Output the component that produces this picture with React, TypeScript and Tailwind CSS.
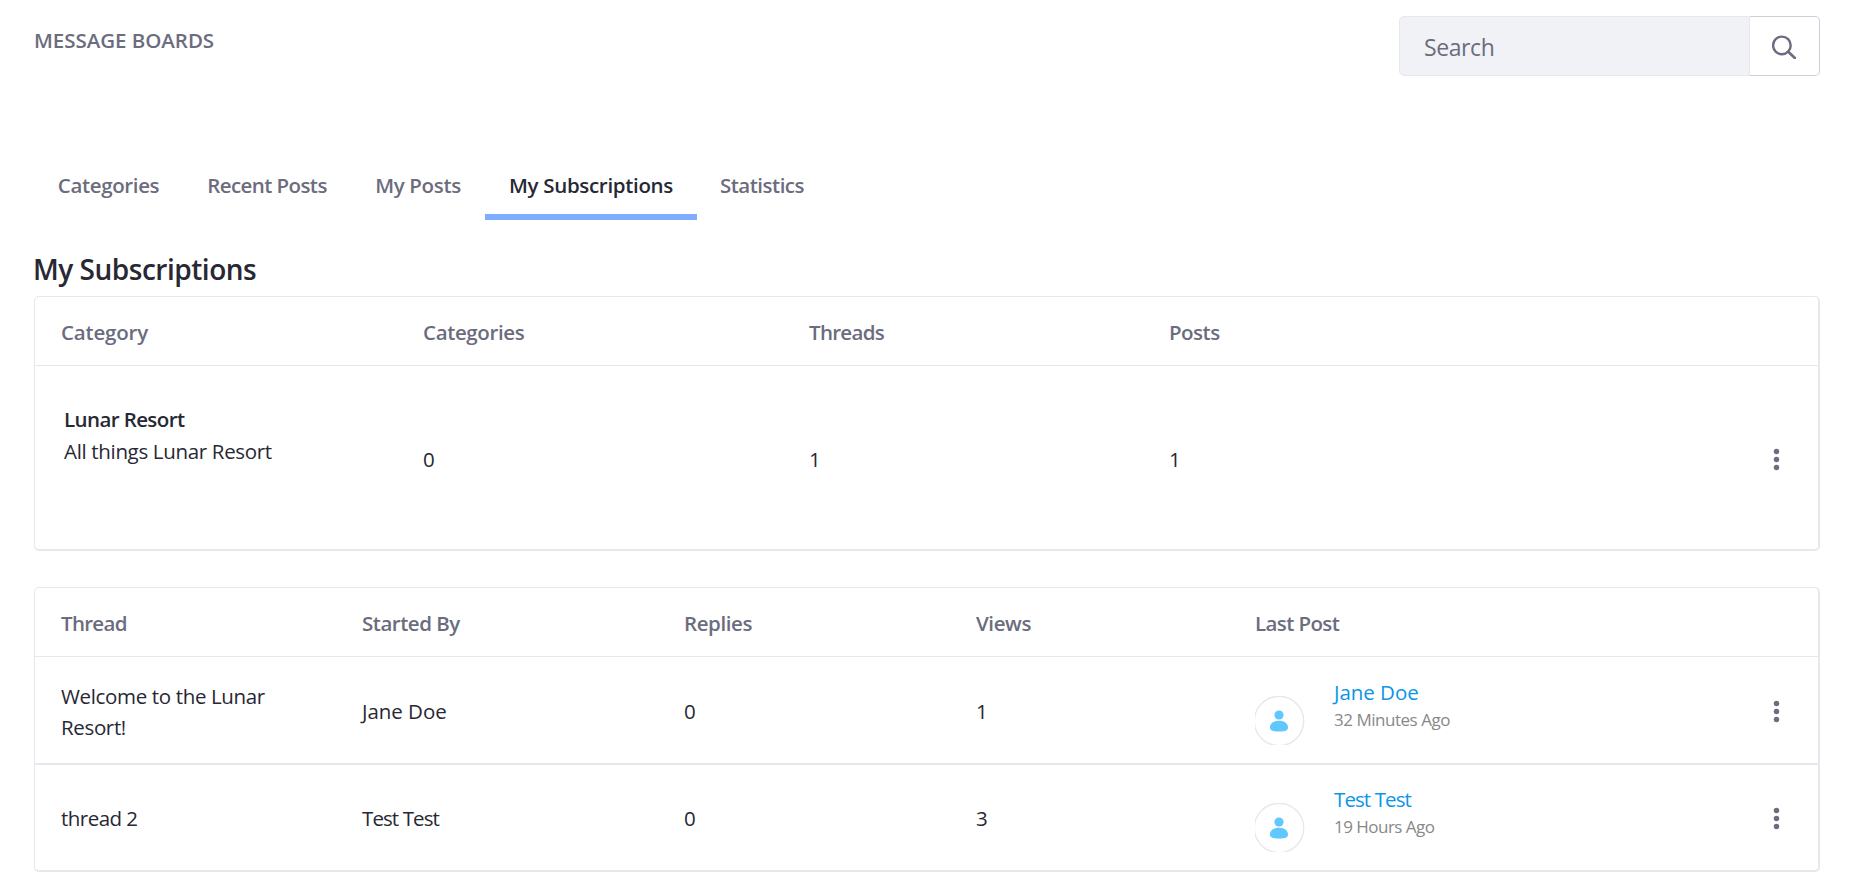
import React from "react";

const DOTS = [4, 12, 20];

function Kebab() {
  return (
    <button className="h-6 w-5" aria-label="Actions">
      <svg viewBox="0 0 20 24" className="h-6 w-5 fill-[#6b6c7e]">
        {DOTS.map((y) => (
          <circle key={y} cx="9.5" cy={y - 0.5} r="2.75" />
        ))}
      </svg>
    </button>
  );
}

function Avatar() {
  return (
    <svg viewBox="0 0 50 49" className="mt-[38px] h-[49px] w-[50px] shrink-0">
      <circle cx="24" cy="25" r="24.7" fill="#fff" stroke="#e7e7ed" strokeWidth="1.4" />
      <circle cx="24" cy="19" r="4.6" fill="#5fc8ff" />
      <path
        d="M24 24.7c5.2 0 9 2.6 9 6.6 0 3.2-1.9 4.3-9 4.3s-9-1.1-9-4.3c0-4 3.8-6.6 9-6.6z"
        fill="#5fc8ff"
      />
    </svg>
  );
}

const TABS = [
  { label: "Categories", cls: "w-[149px] tracking-[-0.36px]" },
  { label: "Recent Posts", cls: "w-[168px] tracking-[-0.58px]" },
  { label: "My Posts", cls: "w-[134px] tracking-[-0.34px]" },
  { label: "My Subscriptions", cls: "w-[212px] tracking-[-0.32px]", active: true },
  { label: "Statistics", cls: "w-[130px] tracking-[-0.5px]" },
];

const THREADS = [
  {
    title: "Welcome to the Lunar Resort!",
    titleCls: "tracking-[-0.35px]",
    author: "Jane Doe",
    authorCls: "tracking-[-0.05px]",
    replies: 0,
    views: 1,
    when: "32 Minutes Ago",
    whenCls: "tracking-[-0.48px]",
    rowCls: "h-[107px] border-b-2",
  },
  {
    title: "thread 2",
    titleCls: "tracking-[-0.53px]",
    author: "Test Test",
    authorCls: "tracking-[-0.9px]",
    replies: 0,
    views: 3,
    when: "19 Hours Ago",
    whenCls: "tracking-[-0.52px]",
    rowCls: "h-[105px]",
  },
];

const CARD = "rounded-[5px] border border-r-2 border-b-2 border-[#e7e7ed]";
const HEAD =
  "grid h-[69px] items-center border-b border-[#e7e7ed] pt-0.5 pl-[26px] font-[550] text-[#6b6c7e]";
const CATEGORY_COLS = "grid-cols-[362px_386px_360px_1fr_51px]";
const THREAD_COLS = "grid-cols-[301px_322px_292px_279px_1fr_51px]";

export default function App() {
  return (
    <div className="h-[886px] overflow-hidden bg-white pr-[30px] pl-[34px] font-['Open_Sans','Noto_Sans',sans-serif] text-[20.5px] leading-[31px] text-[#272833]">
      <header className="flex h-[154px] items-start justify-between pt-4">
        <h1 className="pt-[9px] font-[550] tracking-[-0.04px] text-[#6b6c7e]">MESSAGE BOARDS</h1>
        <div className="flex h-[60px] w-[421px]">
          <div className="flex flex-1 items-center rounded-l-[5px] border border-[#e7e7ed] bg-[#f1f2f5] pt-[3px] pl-6 text-[23px] tracking-[-0.4px] text-[#6b6c7e]">
            Search
          </div>
          <button
            aria-label="Submit search"
            className="flex w-[70px] items-center justify-center rounded-r-[5px] border border-l-0 border-[#cdced9]"
          >
            <svg viewBox="0 0 26 26" className="h-[26px] w-[26px]" fill="none" stroke="#6b6c7e">
              <circle cx="9.9" cy="12.4" r="8.8" strokeWidth="2.4" />
              <path d="M16.3 18.8 22.8 25" strokeWidth="2.6" strokeLinecap="round" />
            </svg>
          </button>
        </div>
      </header>

      <nav className="flex h-[66px] font-[550] text-[#6b6c7e]">
        {TABS.map((t) => (
          <div
            key={t.label}
            className={`flex justify-center border-b-6 pt-4 ${t.cls} ${
              t.active ? "border-[#80acff] text-[#272833]" : "border-transparent"
            }`}
          >
            {t.label}
          </div>
        ))}
      </nav>

      <h2 className="-ml-px h-[76px] pt-[31px] text-[28px] leading-9 font-[550] tracking-[-0.48px]">
        My Subscriptions
      </h2>

      <section className={CARD}>
        <div className={`${HEAD} ${CATEGORY_COLS}`}>
          <span className="tracking-[-0.2px]">Category</span>
          <span className="tracking-[-0.36px]">Categories</span>
          <span className="tracking-[-0.7px]">Threads</span>
          <span className="tracking-[-0.5px]">Posts</span>
        </div>
        <div className={`grid h-[183px] items-center pl-[26px] ${CATEGORY_COLS}`}>
          <div className="self-start pt-[37px] pl-[3px] leading-8">
            <div className="font-[550] tracking-[-0.6px]">Lunar Resort</div>
            <div className="tracking-[-0.33px]">All things Lunar Resort</div>
          </div>
          <span className="pt-[3px]">0</span>
          <span className="pt-[3px]">1</span>
          <span className="pt-[3px]">1</span>
          <span className="flex pt-1">
            <Kebab />
          </span>
        </div>
      </section>

      <section className={`mt-9 ${CARD}`}>
        <div className={`${HEAD} ${THREAD_COLS}`}>
          <span className="tracking-[-0.7px]">Thread</span>
          <span className="tracking-[-0.48px]">Started By</span>
          <span className="tracking-[-0.4px]">Replies</span>
          <span className="tracking-[-0.4px]">Views</span>
          <span className="tracking-[-0.6px]">Last Post</span>
        </div>
        <div className="pt-px">
          {THREADS.map((t) => (
            <div
              key={t.title}
              className={`grid items-center border-[#e7e7ed] pl-[26px] ${THREAD_COLS} ${t.rowCls}`}
            >
              <span className={`w-[230px] pt-0.5 ${t.titleCls}`}>{t.title}</span>
              <span className={`pt-px ${t.authorCls}`}>{t.author}</span>
              <span className="pt-px">{t.replies}</span>
              <span className="pt-px">{t.views}</span>
              <div className="flex h-full">
                <Avatar />
                <div className="pt-[19px] pl-[29px] whitespace-nowrap">
                  <a className={`block text-[#0b95e8] ${t.authorCls}`}>{t.author}</a>
                  <span className={`block text-[17px] leading-6 text-[#888] ${t.whenCls}`}>{t.when}</span>
                </div>
              </div>
              <span className="flex pt-0.5">
                <Kebab />
              </span>
            </div>
          ))}
        </div>
      </section>
    </div>
  );
}
